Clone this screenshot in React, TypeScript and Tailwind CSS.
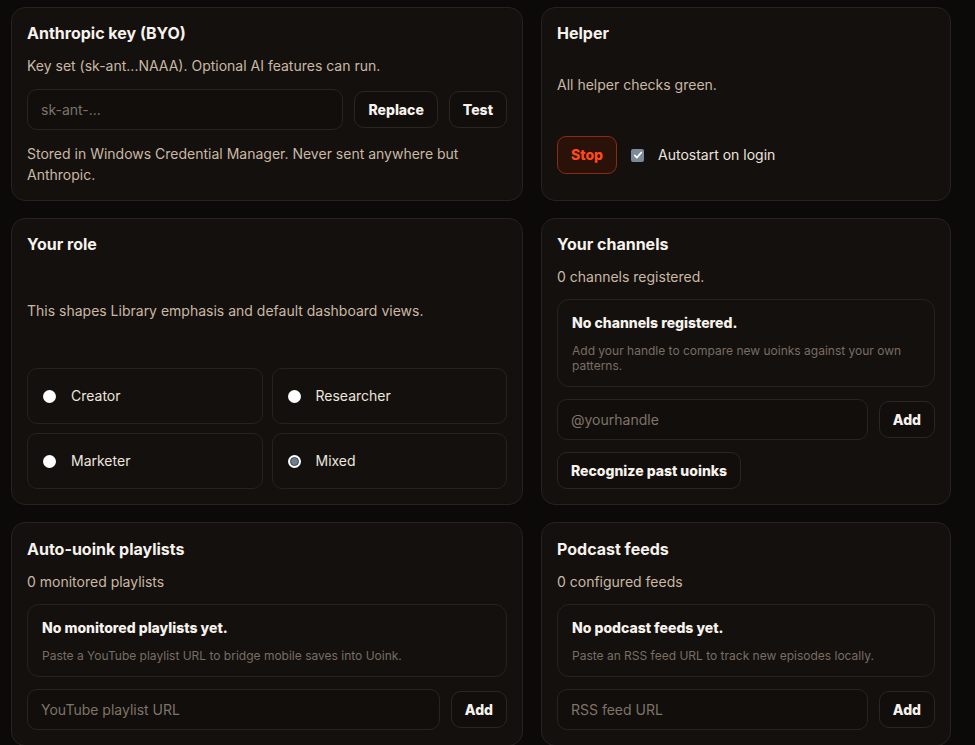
import { useState } from 'react';

const card = 'rounded-[14px] border border-[#27221f] bg-[#13100e] p-[15px]';
const inputCls =
  'h-[41px] min-w-0 flex-1 rounded-[10px] border border-[#2a2420] bg-[#110e0c] px-[13px] text-sm text-[#ece4dc] placeholder:text-[#7f7368] outline-none';
const btnCls =
  'h-[37px] rounded-[10px] border border-[#2c2623] bg-[#110e0c] px-[13px] text-sm font-extrabold text-[#f7f2ec]';

function EmptyBox({ title, desc }: { title: string; desc: string }) {
  return (
    <div className="rounded-[12px] border border-[#27221f] bg-[#13100e] px-[14px] py-[13px]">
      <div className="text-sm font-extrabold leading-5 text-[#f7f2ec]">{title}</div>
      <div className="mt-[10px] text-xs leading-[15px] text-[#7a6d62]">{desc}</div>
    </div>
  );
}

function Radio({ checked }: { checked: boolean }) {
  return (
    <span className="flex h-[13px] w-[13px] shrink-0 items-center justify-center rounded-full bg-white">
      {checked && <span className="h-[9px] w-[9px] rounded-full border border-[#3a4653] bg-[#6d7d8c]" />}
    </span>
  );
}

export default function App() {
  const [role, setRole] = useState('Mixed');
  const [autostart, setAutostart] = useState(true);
  const roles = ['Creator', 'Researcher', 'Marketer', 'Mixed'];

  return (
    <div
      className="min-h-[745px] bg-[#0b0a09] pl-[11px] pt-[7px]"
      style={{ fontFamily: 'Inter, "Noto Sans", sans-serif' }}
    >
      <div className="grid grid-cols-[512px_410px] gap-x-[18px] gap-y-[17px]">
        {/* Anthropic key */}
        <div className={`${card} flex flex-col gap-[13px]`}>
          <h3 className="text-base font-bold leading-5 text-[#f7f2ec]">Anthropic key (BYO)</h3>
          <p className="text-sm leading-5 text-[#cbb8a4]">Key set (sk-ant...NAAA). Optional AI features can run.</p>
          <div className="flex items-center gap-[11px]">
            <input className={inputCls} placeholder="sk-ant-..." />
            <button className={btnCls}>Replace</button>
            <button className={btnCls}>Test</button>
          </div>
          <p className="text-sm leading-[21px] text-[#cbb8a4]">
            Stored in Windows Credential Manager. Never sent anywhere but Anthropic.
          </p>
        </div>

        {/* Helper */}
        <div className={`${card} flex flex-col`}>
          <h3 className="text-base font-bold leading-5 text-[#f7f2ec]">Helper</h3>
          <p className="mt-[32px] text-sm leading-5 text-[#cbb8a4]">All helper checks green.</p>
          <div className="mt-[41px] flex items-center">
            <button className="h-[38px] rounded-[9px] border border-[#8a2b12] bg-[#2a1209] px-[13px] text-sm font-extrabold text-[#ff4a1a]">
              Stop
            </button>
            <label className="ml-[14px] flex items-center gap-[14px] text-sm text-[#ece4dc]">
              <span
                onClick={() => setAutostart(!autostart)}
                className="flex h-[13px] w-[13px] items-center justify-center rounded-[2px] bg-[#7b8a99]"
              >
                {autostart && (
                  <svg viewBox="0 0 12 12" className="h-[10px] w-[10px]">
                    <path d="M2 6.5l2.6 2.6L10 3" fill="none" stroke="white" strokeWidth="2" strokeLinecap="round" strokeLinejoin="round" />
                  </svg>
                )}
              </span>
              Autostart on login
            </label>
          </div>
        </div>

        {/* Your role */}
        <div className={`${card} flex flex-col justify-between`}>
          <h3 className="text-base font-bold leading-5 text-[#f7f2ec]">Your role</h3>
          <p className="text-sm leading-5 text-[#cbb8a4]">This shapes Library emphasis and default dashboard views.</p>
          <div className="grid grid-cols-2 gap-[9px]">
            {roles.map((r) => (
              <button
                key={r}
                onClick={() => setRole(r)}
                className="flex h-[56px] items-center gap-[15px] rounded-[10px] border border-[#27221f] bg-[#13100e] px-[15px] text-left text-sm text-[#ede6de]"
              >
                <Radio checked={role === r} />
                {r}
              </button>
            ))}
          </div>
        </div>

        {/* Your channels */}
        <div className={`${card} flex flex-col gap-[12px]`}>
          <h3 className="text-base font-bold leading-5 text-[#f7f2ec]">Your channels</h3>
          <p className="-mt-[1px] pt-[2px] text-sm leading-5 text-[#cbb8a4]">0 channels registered.</p>
          <EmptyBox
            title="No channels registered."
            desc="Add your handle to compare new uoinks against your own patterns."
          />
          <div className="flex items-center gap-[11px]">
            <input className={inputCls} placeholder="@yourhandle" />
            <button className={btnCls}>Add</button>
          </div>
          <div>
            <button className={btnCls}>Recognize past uoinks</button>
          </div>
        </div>

        {/* Auto-uoink playlists */}
        <div className={`${card} flex flex-col gap-[12px] pt-[16px]`}>
          <h3 className="text-base font-bold leading-5 text-[#f7f2ec]">Auto-uoink playlists</h3>
          <p className="mt-[1px] text-sm leading-5 text-[#cbb8a4]">0 monitored playlists</p>
          <EmptyBox
            title="No monitored playlists yet."
            desc="Paste a YouTube playlist URL to bridge mobile saves into Uoink."
          />
          <div className="flex items-center gap-[11px]">
            <input className={inputCls} placeholder="YouTube playlist URL" />
            <button className={btnCls}>Add</button>
          </div>
        </div>

        {/* Podcast feeds */}
        <div className={`${card} flex flex-col gap-[12px] pt-[16px]`}>
          <h3 className="text-base font-bold leading-5 text-[#f7f2ec]">Podcast feeds</h3>
          <p className="mt-[1px] text-sm leading-5 text-[#cbb8a4]">0 configured feeds</p>
          <EmptyBox title="No podcast feeds yet." desc="Paste an RSS feed URL to track new episodes locally." />
          <div className="flex items-center gap-[11px]">
            <input className={inputCls} placeholder="RSS feed URL" />
            <button className={btnCls}>Add</button>
          </div>
        </div>
      </div>
    </div>
  );
}
